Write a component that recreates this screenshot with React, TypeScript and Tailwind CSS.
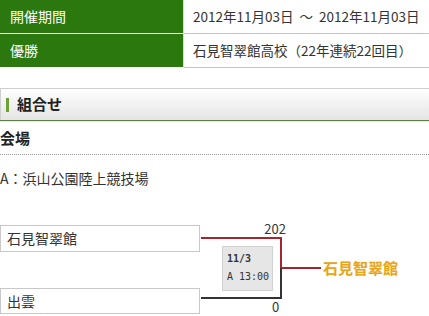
import React from "react";

const font = { fontFamily: '"Noto Sans CJK JP", "Noto Sans", sans-serif' };

export default function App() {
  return (
    <div
      className="w-[429px] h-[316px] overflow-hidden bg-white text-[#333]"
      style={font}
    >
      {/* info table */}
      <div className="flex flex-col">
        <div className="flex h-[34px]">
          <div className="w-[184px] h-full bg-[#2b780f] border-b border-white border-r border-r-[#cfe3c4] text-white text-[14px] pl-[10px] flex items-center">
            開催期間
          </div>
          <div className="flex-1 h-full border-b border-[#c4c4c4] pl-[9px] text-[13.5px] flex items-center whitespace-pre">
            {"2012年11月03日  ～  2012年11月03日"}
          </div>
        </div>
        <div className="flex h-[34px]">
          <div className="w-[184px] h-full bg-[#2b780f] border-b border-white border-r border-r-[#cfe3c4] text-white text-[14px] pl-[10px] flex items-center">
            優勝
          </div>
          <div className="flex-1 h-full border-b border-[#c4c4c4] pl-[9px] text-[13.5px] flex items-center">
            石見智翠館高校（22年連続22回目）
          </div>
        </div>
      </div>

      {/* section header */}
      <div className="mt-[20px] w-[440px] h-[32px] border-t border-l border-[#cfcfcf] bg-gradient-to-b from-white to-[#e4e4e4] flex items-center">
        <div className="ml-[5px] w-[3px] h-[14px] bg-[#6ca234]" />
        <div className="ml-[8px] text-[15px] font-bold text-[#222]">組合せ</div>
      </div>
      <div className="h-[1px] bg-[#5f7f45]" />
      <div className="h-[1px] bg-[#e2f0d8]" />

      {/* venue */}
      <div className="mt-[7px] text-[15px] font-bold text-[#222] leading-[18px]">会場</div>
      <div className="mt-[7px] border-b border-dotted border-[#999]" />
      <div className="mt-[14px] text-[14px] leading-[18px]">A：浜山公園陸上競技場</div>

      {/* bracket */}
      <div className="relative mt-[38px] h-[91px]">
        <div className="flex flex-col gap-[36px] w-[200px]">
          <div className="h-[27px] border border-[#c8c8c8] text-[14px] pl-[6px] flex items-center">
            石見智翠館
          </div>
          <div className="h-[26px] border border-[#c8c8c8] text-[14px] pl-[6px] flex items-center">
            出雲
          </div>
        </div>

        <div className="absolute left-[201px] top-[12px] w-[81px] h-[2px] bg-[#a3262e]" />
        <div className="absolute left-[280px] top-[12px] w-[2px] h-[31px] bg-[#a3262e]" />
        <div className="absolute left-[280px] top-[43px] w-[2px] h-[31px] bg-[#333]" />
        <div className="absolute left-[201px] top-[72px] w-[81px] h-[2px] bg-[#333]" />
        <div className="absolute left-[282px] top-[42px] w-[39px] h-[2px] bg-[#a3262e]" />

        <div className="absolute left-[260px] top-[-3px] w-[26px] text-right text-[13px] leading-[14px]">
          202
        </div>
        <div className="absolute left-[272px] top-[76px] text-[13px] leading-[12px]">
          0
        </div>

        <div
          className="absolute left-[222px] top-[21px] w-[51px] h-[45px] bg-[#e6e6e6] border border-[#d2d2d2] pl-[4px] pt-[6px] text-[10px] leading-[12px]"
          style={{ fontFamily: '"DejaVu Sans Mono", "Liberation Mono", monospace' }}
        >
          <div className="font-bold">11/3</div>
          <div className="mt-[6px]">A 13:00</div>
        </div>

        <div
          className="absolute left-[323px] top-[33px] text-[15px] leading-[20px] font-bold text-[#e8a41c]"
          style={{ textShadow: "0 0 2px #fff3d0" }}
        >
          石見智翠館
        </div>
      </div>
    </div>
  );
}
